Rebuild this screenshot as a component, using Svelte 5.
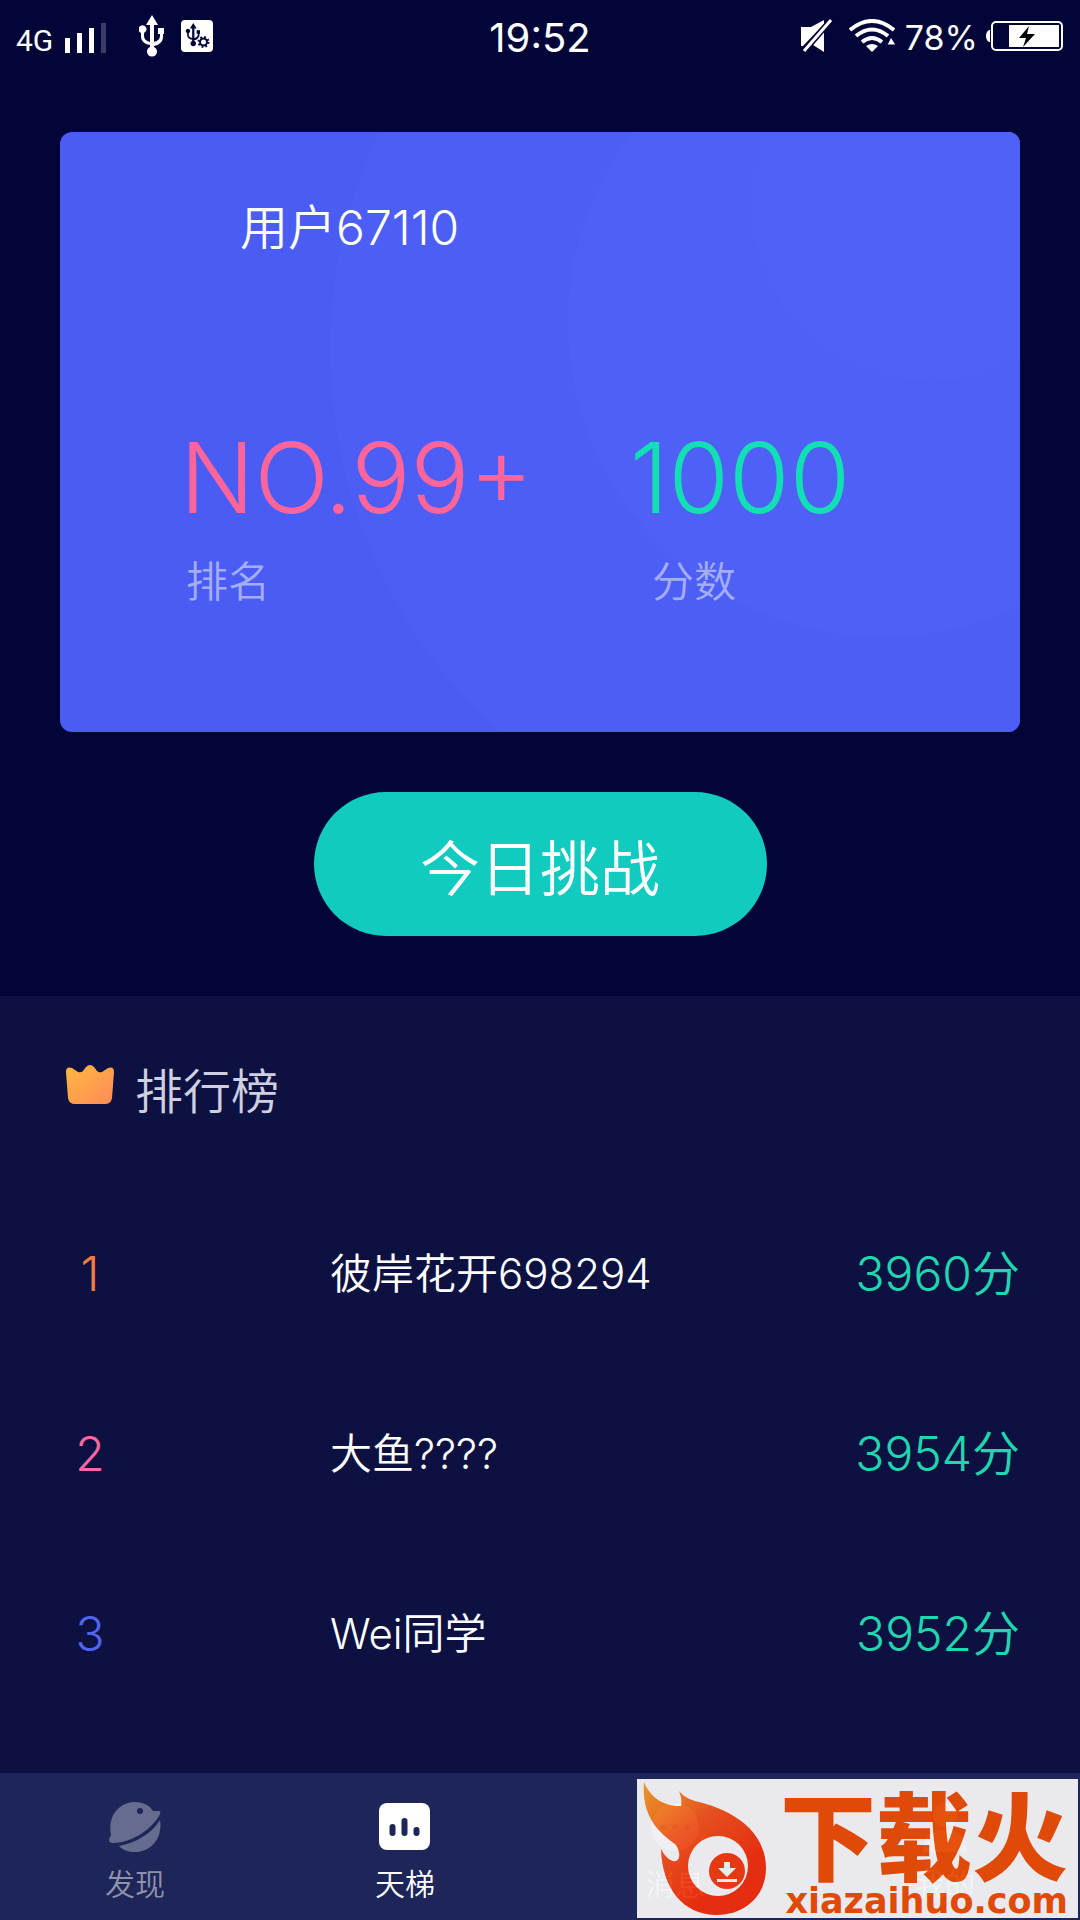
<script>
  const user = { name: '用户67110', rank: 'NO.99+', score: 1000 };

  const ranking = [
    { name: '彼岸花开698294', score: 3960 },
    { name: '大鱼????', score: 3954 },
    { name: 'Wei同学', score: 3952 }
  ];
</script>

<div class="page">
  <header class="status">
    <div class="status-left">
      <span class="network">4G</span>
      <svg class="signal" width="42" height="32" viewBox="0 0 42 32" aria-hidden="true">
        <path d="M0 16h5v15H0zM12 11h5v20h-5zM24 6h5v25h-5z" fill="#fff" />
        <path d="M36 1h5v30h-5z" fill="#3b3d66" />
      </svg>
      <svg class="usb" width="26" height="42" viewBox="0 0 26 42" aria-hidden="true">
        <path d="M13 0l6 10h-4v17c4-1 6-3 6-6v-2h-2v-6h6v6h-1v3c0 5-4 8-9 9v1a5 5 0 1 1-4 0v-2c-6-1-9-4-9-9v-3a4 4 0 1 1 3 0v3c0 3 2 5 6 6V10H7z" fill="#fff" />
      </svg>
      <svg width="32" height="32" viewBox="0 0 32 32" aria-hidden="true">
        <rect width="32" height="32" rx="4" fill="#fff" />
        <g transform="translate(5 3) scale(.56)">
          <path d="M13 0l6 10h-4v17c4-1 6-3 6-6v-2h-2v-6h6v6h-1v3c0 5-4 8-9 9v1a5 5 0 1 1-4 0v-2c-6-1-9-4-9-9v-3a4 4 0 1 1 3 0v3c0 3 2 5 6 6V10H7z" fill="#020538" />
        </g>
        <circle cx="22.500" cy="22" r="6.500" fill="#fff" />
        <circle cx="22.500" cy="22" r="3.500" fill="none" stroke="#020538" stroke-width="2" />
        <circle cx="22.500" cy="22" r="5" fill="none" stroke="#020538" stroke-width="2" stroke-dasharray="1.800 2.127" />
      </svg>
    </div>
    <time class="clock">19:52</time>
    <div class="status-right">
      <svg width="32" height="34" viewBox="0 0 32 34" aria-hidden="true">
        <path d="M0 8h10L23 1v4L2 27H0zM23 12v21l-11-7z" fill="#fff" />
        <path d="M30 1L3 32" stroke="#020538" stroke-width="6" />
        <path d="M30 1L3 32" stroke="#fff" stroke-width="3" />
      </svg>
      <svg class="wifi" width="46" height="34" viewBox="0 0 46 34" aria-hidden="true">
        <g fill="none" stroke="#fff" stroke-width="4">
          <path d="M1 11q22-18 44 0" />
          <path d="M7 17q16-13 32 0" />
          <path d="M13 23q10-8 20 0" />
        </g>
        <path d="M17 27q6-4 12 0l-6 6z" fill="#fff" />
        <path d="M42 18l5 8h-9z" fill="#fff" stroke="#020538" />
      </svg>
      <span class="percent">78%</span>
      <svg class="battery" width="78" height="32" viewBox="0 0 78 32" aria-hidden="true">
        <path d="M4 10v12H3q-3-2-3-6t3-6z" fill="#fff" />
        <rect x="6" y="2" width="70" height="28" rx="4" fill="none" stroke="#fff" stroke-width="2" />
        <path d="M23 5h50v22H23z" fill="#fff" />
        <path d="M43 6l-10 12h7l-3 9 12-13h-8z" fill="#020205" />
      </svg>
    </div>
  </header>

  <main>
    <section class="card">
      <svg class="circles" viewBox="0 0 960 600" preserveAspectRatio="xMaxYMin slice" aria-hidden="true">
        <circle cx="787" cy="218" r="517" fill="#4c5ef5" />
        <circle cx="822" cy="191" r="314" fill="#4e60f6" />
        <circle cx="870" cy="70" r="180" fill="#4f61f6" />
      </svg>
      <h1>{user.name}</h1>
      <div class="stats">
        <div class="stat">
          <strong class="pink">{user.rank}</strong>
          <span>排名</span>
        </div>
        <div class="stat">
          <strong class="green">{user.score}</strong>
          <span class="inset">分数</span>
        </div>
      </div>
    </section>
    <button class="challenge">今日挑战</button>
  </main>

  <section class="board">
    <h2>
      <svg class="crown" width="50" height="42" viewBox="0 0 50 42" aria-hidden="true">
        <defs>
          <linearGradient id="crown" x1="0" y1="0" x2="1" y2="1">
            <stop offset="0" stop-color="#ffb83f" />
            <stop offset="1" stop-color="#ff8a5a" />
          </linearGradient>
        </defs>
        <path d="M1 8q0-6 6-4l6 4q3 1 5-1l3-4q4-4 8 0l3 4q2 2 5 1l6-4q6-2 6 4l-2 26q-1 6-7 6H10q-6 0-7-6z" fill="url(#crown)" />
      </svg>
      <span>排行榜</span>
    </h2>
    <table>
      <tbody>
        {#each ranking as row, i}
          <tr>
            <td class="place place-{i + 1}">{i + 1}</td>
            <td class="name">{row.name}</td>
            <td class="score">{row.score}分</td>
          </tr>
        {/each}
      </tbody>
    </table>
  </section>

  <nav>
    <a href="#discover">
      <svg width="52" height="50" viewBox="0 0 52 50" aria-hidden="true">
        <path d="M2 33C-2 12 12 0 26 0c9 0 15 4 18 9h6q2 0 1 3C45 25 24 41 4 41q-4 0-4-3 0-2 2-5z" fill="#666b90" />
        <path d="M51 18c3 18-9 32-25 32-7 0-12-2-16-6 17-3 33-13 41-26z" fill="#666b90" />
        <circle cx="31" cy="9" r="3" fill="#1e2559" />
      </svg>
      发现
    </a>
    <a href="#ladder" class="active">
      <svg width="52" height="50" viewBox="0 0 52 50" aria-hidden="true">
        <rect x="0" y="1" width="51" height="47" rx="8" fill="#fff" />
        <path d="M13.500 25v6M25.500 19v12M37.500 28v3" stroke="#1e2559" stroke-width="6" stroke-linecap="round" />
      </svg>
      天梯
    </a>
    <a href="#messages">
      <svg width="52" height="50" viewBox="0 0 52 50" aria-hidden="true">
        <circle cx="26" cy="25" r="24" fill="#666b90" />
        <path d="M14 25h.1M26 25h.1M38 25h.1" stroke="#1e2559" stroke-width="5" stroke-linecap="round" />
      </svg>
      消息
    </a>
    <a href="#me">
      <svg width="52" height="50" viewBox="0 0 52 50" aria-hidden="true">
        <circle cx="26" cy="13" r="12" fill="#666b90" />
        <path d="M4 50q0-22 22-22t22 22z" fill="#666b90" />
      </svg>
      我的
    </a>

    <div class="watermark">
      <svg class="flame" width="126" height="134" viewBox="0 0 126 134" aria-hidden="true">
        <defs>
          <linearGradient id="fire" x1="0" y1="0" x2=".6" y2=".8">
            <stop offset="0" stop-color="#ffa723" />
            <stop offset=".5" stop-color="#fb561a" />
            <stop offset="1" stop-color="#fb3008" />
          </linearGradient>
        </defs>
        <path d="M1 0c6 15 20 25 37 24 1-5 0-10-2-15 5 6 11 9 20 11 40 10 67 33 67 66 0 28-21 47-49 47-34 0-55-27-56-66 4 8 10 13 15 12 5-2 4-11-1-17C16 51-2 34 1 0zM75 54a30 30 0 1 0 0 60 30 30 0 0 0 0-60z" fill="url(#fire)" fill-rule="evenodd" />
        <circle cx="84" cy="89" r="18" fill="#fc3c0c" />
        <path d="M81 80h6v6h6l-9 9-9-9h6zM74 97h20v3H74z" fill="#fff" />
      </svg>
      <div class="brand">
        <span class="brand-name">下载火</span>
        <span class="brand-site">xiazaihuo.com</span>
      </div>
    </div>
  </nav>
</div>

<style>
  :global(body) {
    margin: 0;
    background: #020538;
  }

  .page {
    display: flex;
    flex-direction: column;
    min-height: 100vh;
    color: #fff;
    font-family: Inter, 'Noto Sans CJK SC', sans-serif;
    font-weight: 350;
  }

  /* status bar */
  .status {
    display: grid;
    grid-template-columns: 1fr auto 1fr;
    align-items: center;
    height: 72px;
    padding: 0 16px;
    font-weight: 400;
  }

  .status-left,
  .status-right {
    display: flex;
    align-items: center;
  }

  .status-right {
    justify-content: flex-end;
  }

  .network {
    font-family: Roboto, sans-serif;
    font-size: 30px;
    line-height: 32px;
    padding-top: 10px;
  }

  .signal {
    margin: 4px 32px 0 12px;
  }

  .usb {
    margin-right: 16px;
  }

  .clock {
    padding-top: 4px;
    font-size: 40px;
    line-height: 48px;
  }

  .percent {
    padding-top: 4px;
    font-size: 34px;
    line-height: 40px;
  }

  .wifi {
    margin: 0 10px 0 16px;
  }

  .battery {
    margin-left: 8px;
  }

  /* profile card */
  main {
    display: flex;
    flex-direction: column;
    align-items: center;
    gap: 60px;
    padding: 60px;
  }

  .card {
    position: relative;
    box-sizing: border-box;
    width: 100%;
    padding: 66px 120px 120px;
    border-radius: 12px;
    background: #4a5cf4;
    overflow: hidden;
  }

  .circles {
    position: absolute;
    inset: 0;
    width: 100%;
    height: 100%;
  }

  h1 {
    position: relative;
    margin: 0 0 172px;
    padding-left: 60px;
    font-size: 48px;
    font-weight: 350;
    line-height: 60px;
  }

  .stats {
    position: relative;
    display: grid;
    grid-template-columns: 5fr 3fr;
  }

  .stat {
    display: flex;
    flex-direction: column;
    gap: 26px;
  }

  .stat strong {
    font-size: 98px;
    font-weight: 300;
    line-height: 96px;
  }

  .stat span {
    font-size: 42px;
    line-height: 60px;
    padding-left: 6px;
    color: #a4adfa;
  }

  .stat .inset {
    padding-left: 22px;
  }

  .pink {
    color: #ff659b;
  }

  .green {
    color: #12dfb4;
  }

  .challenge {
    width: 453px;
    height: 144px;
    border: 0;
    border-radius: 72px;
    background: #12cbbf;
    color: #fff;
    font: inherit;
    font-size: 60px;
  }

  /* leaderboard */
  .board {
    flex: 1;
    padding: 56px 60px 0;
    background: #0d1141;
  }

  h2 {
    display: flex;
    align-items: flex-start;
    gap: 20px;
    margin: 0;
    padding-left: 5px;
    font-size: 48px;
    font-weight: 350;
    line-height: 68px;
    color: #cfd0df;
  }

  h2 span {
    padding-top: 6px;
  }

  .crown {
    margin-top: 12px;
  }

  table {
    width: 100%;
    margin-top: 58px;
    border-collapse: collapse;
  }

  td {
    height: 180px;
    padding: 0;
    font-size: 48px;
    line-height: 60px;
  }

  .place {
    width: 60px;
    text-align: center;
  }

  .place-1 {
    color: #f57c41;
  }

  .place-2 {
    color: #f968a3;
  }

  .place-3 {
    color: #5263f2;
  }

  td.name {
    padding-left: 210px;
    font-size: 42px;
  }

  .score {
    text-align: right;
    color: #1fd6b0;
  }

  /* bottom tabs */
  nav {
    position: relative;
    display: grid;
    grid-template-columns: repeat(4, 1fr);
    height: 147px;
    background: #1e2559;
  }

  nav a {
    display: flex;
    flex-direction: column;
    align-items: center;
    gap: 12px;
    padding-top: 29px;
    font-size: 30px;
    line-height: 40px;
    color: #8e92ac;
    text-decoration: none;
  }

  nav .active {
    color: #fff;
  }

  .watermark {
    position: absolute;
    right: 2px;
    bottom: 2px;
    display: flex;
    box-sizing: border-box;
    width: 441px;
    height: 139px;
    padding: 3px 10px 0 6px;
    background: #fff;
    color: #f54f01;
    opacity: 0.9;
  }

  .flame {
    flex: none;
  }

  .brand {
    display: flex;
    flex: 1;
    flex-direction: column;
    align-items: flex-end;
    padding-top: 6px;
  }

  .brand-name {
    font-size: 96px;
    font-weight: 900;
    line-height: 100px;
    white-space: nowrap;
  }

  .brand-site {
    font-family: 'DejaVu Sans', sans-serif;
    font-size: 35px;
    font-weight: 700;
    line-height: 26px;
  }
</style>
